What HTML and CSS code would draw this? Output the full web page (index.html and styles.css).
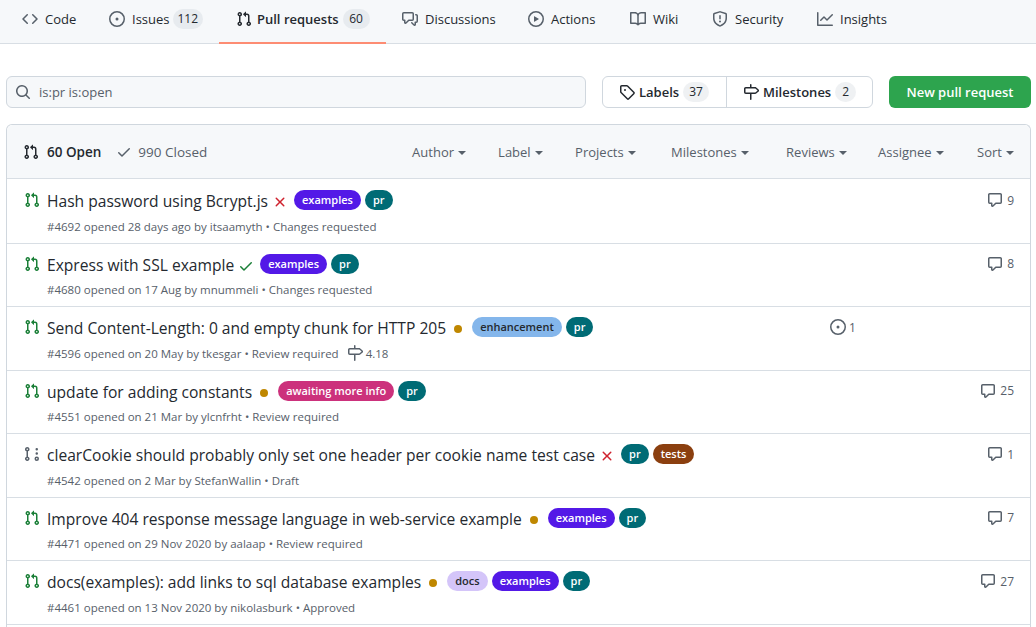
FILE: index.html
```html
<!DOCTYPE html>
<html lang="en">
<head>
    <meta charset="UTF-8">
    <title>Pull requests</title>
    <link rel="stylesheet" href="styles.css">
</head>
<body>
    <svg class="sprites" width="0" height="0">
        <symbol id="i-code" viewBox="0 0 16 16"><path d="M4.72 3.22a.75.75 0 011.06 1.06L2.06 8l3.72 3.72a.75.75 0 11-1.06 1.06L.47 8.53a.75.75 0 010-1.06l4.25-4.25zm6.56 0a.75.75 0 10-1.06 1.06L13.94 8l-3.72 3.72a.75.75 0 101.06 1.06l4.25-4.25a.75.75 0 000-1.06l-4.25-4.25z"/></symbol>
        <symbol id="i-issue" viewBox="0 0 16 16"><path d="M8 9.5a1.5 1.5 0 100-3 1.5 1.5 0 000 3z"/><path fill-rule="evenodd" d="M8 0a8 8 0 100 16A8 8 0 008 0zM1.5 8a6.5 6.5 0 1113 0 6.5 6.5 0 01-13 0z"/></symbol>
        <symbol id="i-pr" viewBox="0 0 16 16"><path fill-rule="evenodd" d="M7.177 3.073L9.573.677A.25.25 0 0110 .854v4.792a.25.25 0 01-.427.177L7.177 3.427a.25.25 0 010-.354zM3.75 2.5a.75.75 0 100 1.5.75.75 0 000-1.5zm-2.25.75a2.25 2.25 0 113 2.122v5.256a2.251 2.251 0 11-1.5 0V5.372A2.25 2.25 0 011.5 3.25zM11 2.5h-1V4h1a1 1 0 011 1v5.628a2.251 2.251 0 101.5 0V5A2.5 2.5 0 0011 2.5zm1 10.25a.75.75 0 111.5 0 .75.75 0 01-1.5 0zM3.75 12a.75.75 0 100 1.5.75.75 0 000-1.5z"/></symbol>
        <symbol id="i-draft" viewBox="0 0 16 16"><path fill-rule="evenodd" d="M2.5 3.25a.75.75 0 111.5 0 .75.75 0 01-1.5 0zM3.25 1a2.25 2.25 0 00-.75 4.372v5.256a2.251 2.251 0 101.5 0V5.372A2.25 2.25 0 003.25 1zm0 11a.75.75 0 100 1.5.75.75 0 000-1.5zm9.5 3a2.25 2.25 0 100-4.5 2.25 2.25 0 000 4.5zm0-3a.75.75 0 100 1.5.75.75 0 000-1.5z"/><path d="M14 7.5a1.25 1.25 0 11-2.5 0 1.25 1.25 0 012.5 0zm0-4.25a1.25 1.25 0 11-2.5 0 1.25 1.25 0 012.5 0z"/></symbol>
        <symbol id="i-discuss" viewBox="0 0 16 16"><path fill-rule="evenodd" d="M1.5 2.75a.25.25 0 01.25-.25h8.5a.25.25 0 01.25.25v5.5a.25.25 0 01-.25.25h-3.5a.75.75 0 00-.53.22L3.5 11.44V9.25a.75.75 0 00-.75-.75h-1a.25.25 0 01-.25-.25v-5.5zM1.75 1A1.75 1.75 0 000 2.75v5.5C0 9.216.784 10 1.75 10H2v1.543a1.457 1.457 0 002.487 1.03L7.061 10h3.189A1.75 1.75 0 0012 8.25v-5.5A1.75 1.75 0 0010.25 1h-8.5zM14.5 4.75a.25.25 0 00-.25-.25h-.5a.75.75 0 110-1.5h.5c.966 0 1.75.784 1.75 1.75v5.5A1.75 1.75 0 0114.25 12H14v1.543a1.457 1.457 0 01-2.487 1.03L9.22 12.28a.75.75 0 111.06-1.06l2.22 2.22v-2.19a.75.75 0 01.75-.75h1a.25.25 0 00.25-.25v-5.5z"/></symbol>
        <symbol id="i-play" viewBox="0 0 16 16"><path fill-rule="evenodd" d="M1.5 8a6.5 6.5 0 1113 0 6.5 6.5 0 01-13 0zM8 0a8 8 0 100 16A8 8 0 008 0zM6.379 5.227A.25.25 0 006 5.442v5.117a.25.25 0 00.379.214l4.264-2.559a.25.25 0 000-.428L6.379 5.227z"/></symbol>
        <symbol id="i-book" viewBox="0 0 16 16"><path fill-rule="evenodd" d="M0 1.75A.75.75 0 01.75 1h4.253c1.227 0 2.317.59 3 1.501A3.744 3.744 0 0111.006 1h4.245a.75.75 0 01.75.75v10.5a.75.75 0 01-.75.75h-4.507a2.25 2.25 0 00-1.591.659l-.622.621a.75.75 0 01-1.06 0l-.622-.621A2.25 2.25 0 005.258 13H.75a.75.75 0 01-.75-.75V1.75zm8.755 3a2.25 2.25 0 012.25-2.25H14.5v9h-3.757c-.71 0-1.4.201-1.992.572l.004-7.322zm-1.504 7.324l.004-5.073-.002-2.253A2.25 2.25 0 005.003 2.5H1.5v9h3.757a3.75 3.75 0 011.994.574z"/></symbol>
        <symbol id="i-shield" viewBox="0 0 16 16"><path fill-rule="evenodd" d="M7.467.133a1.75 1.75 0 011.066 0l5.25 1.68A1.75 1.75 0 0115 3.48V7c0 1.566-.32 3.182-1.303 4.682-.983 1.498-2.585 2.813-5.032 3.855a1.7 1.7 0 01-1.33 0c-2.447-1.042-4.049-2.357-5.032-3.855C1.32 10.182 1 8.566 1 7V3.48a1.75 1.75 0 011.217-1.667l5.25-1.68zm.61 1.429a.25.25 0 00-.153 0l-5.25 1.68a.25.25 0 00-.174.238V7c0 1.358.275 2.666 1.057 3.86.784 1.194 2.121 2.34 4.366 3.297a.2.2 0 00.154 0c2.245-.956 3.582-2.104 4.366-3.298C13.225 9.666 13.5 8.36 13.5 7V3.48a.25.25 0 00-.174-.237l-5.25-1.68zM9 10.5a1 1 0 11-2 0 1 1 0 012 0zm-.25-5.75a.75.75 0 10-1.5 0v3a.75.75 0 001.5 0v-3z"/></symbol>
        <symbol id="i-graph" viewBox="0 0 16 16"><path fill-rule="evenodd" d="M1.5 1.75a.75.75 0 00-1.5 0v12.5c0 .414.336.75.75.75h14.5a.75.75 0 000-1.5H1.5V1.75zm14.28 2.53a.75.75 0 00-1.06-1.06L10 7.94 7.53 5.47a.75.75 0 00-1.06 0L3.22 8.72a.75.75 0 001.06 1.06L7 7.06l2.47 2.47a.75.75 0 001.06 0l5.25-5.25z"/></symbol>
        <symbol id="i-search" viewBox="0 0 16 16"><path fill-rule="evenodd" d="M11.5 7a4.499 4.499 0 11-8.998 0A4.499 4.499 0 0111.5 7zm-.82 4.74a6 6 0 111.06-1.06l3.04 3.04a.75.75 0 11-1.06 1.06l-3.04-3.04z"/></symbol>
        <symbol id="i-tag" viewBox="0 0 16 16"><path fill-rule="evenodd" d="M2.5 7.775V2.75a.25.25 0 01.25-.25h5.025a.25.25 0 01.177.073l6.25 6.25a.25.25 0 010 .354l-5.025 5.025a.25.25 0 01-.354 0l-6.25-6.25a.25.25 0 01-.073-.177zm-1.5 0V2.75C1 1.784 1.784 1 2.75 1h5.025c.464 0 .91.184 1.238.513l6.25 6.25a1.75 1.75 0 010 2.474l-5.026 5.026a1.75 1.75 0 01-2.474 0l-6.25-6.25A1.75 1.75 0 011 7.775zM6 5a1 1 0 100 2 1 1 0 000-2z"/></symbol>
        <symbol id="i-milestone" viewBox="0 0 16 16"><path fill-rule="evenodd" d="M7.75 0a.75.75 0 01.75.75V3h3.634c.414 0 .814.147 1.13.414l2.07 1.75a1.75 1.75 0 010 2.672l-2.07 1.75a1.75 1.75 0 01-1.13.414H8.5v5.25a.75.75 0 11-1.5 0V10H2.75A1.75 1.75 0 011 8.25v-3.5C1 3.784 1.784 3 2.75 3H7V.75A.75.75 0 017.75 0zm0 8.5h4.384a.25.25 0 00.161-.06l2.07-1.75a.25.25 0 000-.38l-2.07-1.75a.25.25 0 00-.161-.06H2.75a.25.25 0 00-.25.25v3.5c0 .138.112.25.25.25h5z"/></symbol>
        <symbol id="i-check" viewBox="0 0 16 16"><path fill-rule="evenodd" d="M13.78 4.22a.75.75 0 010 1.06l-7.25 7.25a.75.75 0 01-1.06 0L2.22 9.28a.75.75 0 011.06-1.06L6 10.94l6.72-6.72a.75.75 0 011.06 0z"/></symbol>
        <symbol id="i-x" viewBox="0 0 16 16"><path fill-rule="evenodd" d="M3.72 3.72a.75.75 0 011.06 0L8 6.94l3.22-3.22a.75.75 0 111.06 1.06L9.06 8l3.22 3.22a.75.75 0 11-1.06 1.06L8 9.06l-3.22 3.22a.75.75 0 01-1.06-1.06L6.94 8 3.72 4.78a.75.75 0 010-1.06z"/></symbol>
        <symbol id="i-dot" viewBox="0 0 16 16"><path d="M8 4a4 4 0 100 8 4 4 0 000-8z"/></symbol>
        <symbol id="i-comment" viewBox="0 0 16 16"><path fill-rule="evenodd" d="M2.75 2.5a.25.25 0 00-.25.25v7.5c0 .138.112.25.25.25h2a.75.75 0 01.75.75v2.19l2.72-2.72a.75.75 0 01.53-.22h4.5a.25.25 0 00.25-.25v-7.5a.25.25 0 00-.25-.25H2.75zM1 2.75C1 1.784 1.784 1 2.75 1h10.5c.966 0 1.75.784 1.75 1.75v7.5A1.75 1.75 0 0113.25 12H9.06l-2.573 2.573A1.457 1.457 0 014 13.543V12H2.75A1.75 1.75 0 011 10.25v-7.5z"/></symbol>
    </svg>

    <nav class="tabs">
        <a class="tab"><svg class="icon"><use href="#i-code"/></svg>Code</a>
        <a class="tab"><svg class="icon"><use href="#i-issue"/></svg>Issues<span class="counter">112</span></a>
        <a class="tab active"><svg class="icon"><use href="#i-pr"/></svg>Pull requests<span class="counter">60</span></a>
        <a class="tab"><svg class="icon"><use href="#i-discuss"/></svg>Discussions</a>
        <a class="tab"><svg class="icon"><use href="#i-play"/></svg>Actions</a>
        <a class="tab"><svg class="icon"><use href="#i-book"/></svg>Wiki</a>
        <a class="tab"><svg class="icon"><use href="#i-shield"/></svg>Security</a>
        <a class="tab"><svg class="icon"><use href="#i-graph"/></svg>Insights</a>
    </nav>

    <div class="toolbar">
        <div class="search"><svg class="icon"><use href="#i-search"/></svg>is:pr is:open</div>
        <div class="btn-group">
            <a class="btn-link labels-link"><svg class="icon"><use href="#i-tag"/></svg>Labels<span class="counter">37</span></a>
            <a class="btn-link miles-link"><svg class="icon"><use href="#i-milestone"/></svg>Milestones<span class="counter">2</span></a>
        </div>
        <a class="btn-new">New pull request</a>
    </div>

    <div class="box">
        <div class="box-header">
            <a class="state open"><svg class="icon"><use href="#i-pr"/></svg>60 Open</a>
            <a class="state"><svg class="icon"><use href="#i-check"/></svg>990 Closed</a>
            <div class="filters">
                <span class="filter">Author</span>
                <span class="filter">Label</span>
                <span class="filter">Projects</span>
                <span class="filter">Milestones</span>
                <span class="filter">Reviews</span>
                <span class="filter">Assignee</span>
                <span class="filter">Sort</span>
            </div>
        </div>

        <div class="row">
            <svg class="icon pr-icon"><use href="#i-pr"/></svg>
            <div class="row-main">
                <div class="row-title">
                    <a class="title">Hash password using Bcrypt.js</a>
                    <svg class="icon status red"><use href="#i-x"/></svg>
                    <span class="tag examples">examples</span>
                    <span class="tag pr">pr</span>
                </div>
                <div class="meta">#4692 opened 28 days ago by itsaamyth • Changes requested</div>
            </div>
            <div class="row-side"><span class="comments"><svg class="icon"><use href="#i-comment"/></svg>9</span></div>
        </div>

        <div class="row">
            <svg class="icon pr-icon"><use href="#i-pr"/></svg>
            <div class="row-main">
                <div class="row-title">
                    <a class="title">Express with SSL example</a>
                    <svg class="icon status green"><use href="#i-check"/></svg>
                    <span class="tag examples">examples</span>
                    <span class="tag pr">pr</span>
                </div>
                <div class="meta">#4680 opened on 17 Aug by mnummeli • Changes requested</div>
            </div>
            <div class="row-side"><span class="comments"><svg class="icon"><use href="#i-comment"/></svg>8</span></div>
        </div>

        <div class="row">
            <svg class="icon pr-icon"><use href="#i-pr"/></svg>
            <div class="row-main">
                <div class="row-title">
                    <a class="title">Send Content-Length: 0 and empty chunk for HTTP 205</a>
                    <svg class="icon status amber"><use href="#i-dot"/></svg>
                    <span class="tag enhancement">enhancement</span>
                    <span class="tag pr">pr</span>
                </div>
                <div class="meta">#4596 opened on 20 May by tkesgar • Review required<span class="meta-milestone"><svg class="icon"><use href="#i-milestone"/></svg>4.18</span></div>
            </div>
            <div class="row-side"><span class="linked"><svg class="icon"><use href="#i-issue"/></svg>1</span></div>
        </div>

        <div class="row">
            <svg class="icon pr-icon"><use href="#i-pr"/></svg>
            <div class="row-main">
                <div class="row-title">
                    <a class="title">update for adding constants</a>
                    <svg class="icon status amber"><use href="#i-dot"/></svg>
                    <span class="tag awaiting">awaiting more info</span>
                    <span class="tag pr">pr</span>
                </div>
                <div class="meta">#4551 opened on 21 Mar by ylcnfrht • Review required</div>
            </div>
            <div class="row-side"><span class="comments"><svg class="icon"><use href="#i-comment"/></svg>25</span></div>
        </div>

        <div class="row">
            <svg class="icon draft-icon"><use href="#i-draft"/></svg>
            <div class="row-main">
                <div class="row-title">
                    <a class="title">clearCookie should probably only set one header per cookie name test case</a>
                    <svg class="icon status red"><use href="#i-x"/></svg>
                    <span class="tag pr">pr</span>
                    <span class="tag tests">tests</span>
                </div>
                <div class="meta">#4542 opened on 2 Mar by StefanWallin • Draft</div>
            </div>
            <div class="row-side"><span class="comments"><svg class="icon"><use href="#i-comment"/></svg>1</span></div>
        </div>

        <div class="row">
            <svg class="icon pr-icon"><use href="#i-pr"/></svg>
            <div class="row-main">
                <div class="row-title">
                    <a class="title">Improve 404 response message language in web-service example</a>
                    <svg class="icon status amber"><use href="#i-dot"/></svg>
                    <span class="tag examples">examples</span>
                    <span class="tag pr">pr</span>
                </div>
                <div class="meta">#4471 opened on 29 Nov 2020 by aalaap • Review required</div>
            </div>
            <div class="row-side"><span class="comments"><svg class="icon"><use href="#i-comment"/></svg>7</span></div>
        </div>

        <div class="row">
            <svg class="icon pr-icon"><use href="#i-pr"/></svg>
            <div class="row-main">
                <div class="row-title">
                    <a class="title">docs(examples): add links to sql database examples</a>
                    <svg class="icon status amber"><use href="#i-dot"/></svg>
                    <span class="tag docs">docs</span>
                    <span class="tag examples">examples</span>
                    <span class="tag pr">pr</span>
                </div>
                <div class="meta">#4461 opened on 13 Nov 2020 by nikolasburk • Approved</div>
            </div>
            <div class="row-side"><span class="comments"><svg class="icon"><use href="#i-comment"/></svg>27</span></div>
        </div>
    </div>
</body>
</html>
```

FILE: styles.css
```css
html, body {
    height: 627px;
    overflow: hidden;
}

body {
    margin: 0;
    font-family: "Open Sans", Arial, sans-serif;
    font-size: 13px;
    color: #24292f;
    background-color: #ffffff;
}

.sprites {
    display: none;
}

.icon {
    width: 16px;
    height: 16px;
    fill: currentColor;
    flex: none;
}

/* Top tabs */
.tabs {
    display: grid;
    grid-template-columns: 87px 126px 167px 126px 102px 82px 105px 102px;
    height: 43px;
    padding-left: 6px;
    background-color: #f6f8fa;
    border-bottom: 1px solid #d8dee4;
}

.tab {
    display: flex;
    align-items: center;
    gap: 7px;
    box-sizing: border-box;
    height: 44px;
    padding: 0 0 6px 16px;
    color: #24292f;
}

.tab .icon {
    color: #57606a;
}

.tab.active {
    gap: 5px;
    padding: 0 0 4px 17px;
    font-weight: 600;
    border-bottom: 2px solid #fd8c73;
}

.tab.active .icon {
    color: #24292f;
}

.counter {
    display: inline-block;
    min-width: 9px;
    padding: 0 6px;
    font-size: 12px;
    font-weight: 400;
    line-height: 20px;
    text-align: center;
    border-radius: 2em;
    background-color: rgba(175, 184, 193, 0.2);
}

.tab .counter {
    min-width: 17px;
    padding: 0 5px;
    margin-left: -4px;
}

.tab.active .counter {
    margin-left: -1px;
}

/* Search and buttons */
.toolbar {
    display: flex;
    align-items: stretch;
    height: 32px;
    margin: 32px 5px 16px 6px;
}

.search {
    flex: 1;
    display: flex;
    align-items: center;
    gap: 8px;
    padding-left: 8px;
    color: #57606a;
    background-color: #f6f8fa;
    border: 1px solid #d0d7de;
    border-radius: 6px;
}

.btn-group {
    display: flex;
    margin-left: 16px;
    border: 1px solid #d0d7de;
    border-radius: 6px;
}

.btn-link {
    display: flex;
    align-items: center;
    gap: 4px;
    font-weight: 600;
    box-sizing: border-box;
}

.labels-link {
    width: 124px;
    padding-left: 16px;
    border-right: 1px solid #d0d7de;
}

.miles-link {
    width: 145px;
    padding-left: 16px;
}

.btn-new {
    display: flex;
    align-items: center;
    justify-content: center;
    width: 142px;
    margin-left: 16px;
    font-weight: 600;
    color: #ffffff;
    background-color: #2da44e;
    border-radius: 6px;
}

/* Pull request list */
.box {
    margin: 0 5px 0 6px;
    border: 1px solid #d0d7de;
    border-bottom: none;
    border-radius: 6px 6px 0 0;
    height: 503px;
}

.box-header {
    display: flex;
    align-items: center;
    height: 53px;
    padding: 0 16px;
    background-color: #f6f8fa;
    border-bottom: 1px solid #d8dee4;
    border-radius: 6px 6px 0 0;
}

.state {
    display: flex;
    align-items: center;
    gap: 6px;
    margin-right: 15px;
    font-size: 13.5px;
    color: #57606a;
}

.state.open {
    gap: 8px;
    color: #24292f;
    font-weight: 600;
}

.filters {
    margin-left: auto;
    display: grid;
    grid-template-columns: 86px 77px 96px 115px 92px 99px auto;
    color: #57606a;
}

.filter::after {
    content: "";
    display: inline-block;
    margin-left: 4px;
    vertical-align: 2px;
    border-top: 4px solid currentColor;
    border-left: 4px solid transparent;
    border-right: 4px solid transparent;
}

.row {
    display: flex;
    height: 63.5px;
    box-sizing: border-box;
    padding: 12px 16px 0 17px;
    border-bottom: 1px solid #d8dee4;
}

.box-header + .row {
    height: 64.5px;
    padding-top: 13px;
}

.pr-icon {
    color: #1a7f37;
}

.draft-icon {
    color: #57606a;
}

.row-main {
    flex: 1;
    padding-left: 7px;
    min-width: 0;
}

.row-title {
    display: flex;
    align-items: flex-start;
    height: 22px;
    margin-top: -2px;
}

.title {
    font-size: 15.6px;
    font-weight: 500;
    line-height: 22px;
    margin-right: 4px;
}

.status {
    margin: 4px 6px 0 0;
}

.red {
    color: #cf222e;
}

.green {
    color: #1a7f37;
}

.amber {
    color: #bf8700;
}

.tag {
    height: 20px;
    margin: 0 4px 0 0;
    padding: 0 8px;
    font-size: 11px;
    font-weight: 600;
    line-height: 20px;
    color: #ffffff;
    border-radius: 2em;
}

.examples { background-color: #5319e7; }
.pr { background-color: #006b75; }
.enhancement { background-color: #84b6eb; color: #24292f; }
.awaiting { background-color: #cc317c; }
.tests { background-color: #8b3f0f; }
.docs { background-color: #d4c5f9; color: #24292f; }

.meta {
    display: flex;
    align-items: center;
    height: 18px;
    margin-top: 5px;
    font-size: 11.5px;
    color: #57606a;
}

.meta-milestone {
    display: flex;
    align-items: center;
    gap: 3px;
    margin-left: 8px;
    font-size: 11.5px;
}

.row-side {
    display: flex;
    width: 184px;
    height: 18px;
    margin-top: -1px;
    color: #57606a;
    font-size: 12px;
}

.comments {
    display: flex;
    align-items: center;
    gap: 4px;
    margin-left: auto;
}

.linked {
    display: flex;
    align-items: center;
    gap: 3px;
}
```
